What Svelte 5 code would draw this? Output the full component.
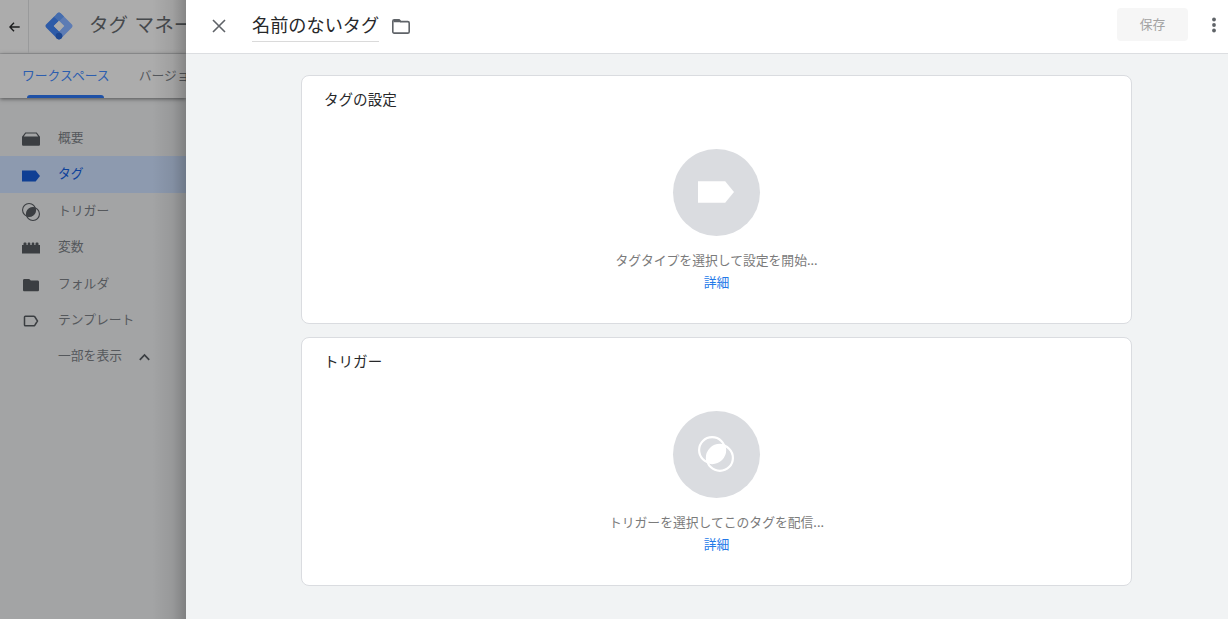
<script lang="ts">
  type NavItem = { icon: string; label: string; active?: boolean };

  const navItems: NavItem[] = [
    { icon: 'overview', label: '概要' },
    { icon: 'tag', label: 'タグ', active: true },
    { icon: 'trigger', label: 'トリガー' },
    { icon: 'variable', label: '変数' },
    { icon: 'folder', label: 'フォルダ' },
    { icon: 'template', label: 'テンプレート' },
  ];

  const cards = [
    { icon: 'tag', title: 'タグの設定', hint: 'タグタイプを選択して設定を開始...' },
    { icon: 'trigger', title: 'トリガー', hint: 'トリガーを選択してこのタグを配信...' },
  ];
</script>

{#snippet glyph(name: string)}
  {#if name === 'overview'}
    <path d="M3.3 2.5h11.4L18 6.8v7.7a1.2 1.2 0 0 1-1.2 1.2H1.2A1.2 1.2 0 0 1 0 14.5V6.8zM3.9 3.6 1.8 6.5h14.4l-2.1-2.9z" fill-rule="evenodd" />
  {:else if name === 'tag'}
    <path d="M0 3.6h13.6L18 9l-4.4 5.4H0z" />
  {:else if name === 'trigger'}
    <circle cx="7.05" cy="7.05" r="6.5" fill="none" stroke="currentColor" stroke-width="1.1" />
    <circle cx="10.95" cy="10.95" r="6.5" fill="none" stroke="currentColor" stroke-width="1.1" />
    <path d="M13.16 4.84A6.5 6.5 0 0 1 4.84 13.16 6.5 6.5 0 0 1 13.16 4.84z" />
  {:else if name === 'variable'}
    <path d="M0 14.6V6h1.5V4.4q0-1 1-1h1q1 0 1 1V6h1.2V4.4q0-1 1-1h.6q1 0 1 1V6h1.4V4.4q0-1 1-1h.6q1 0 1 1V6h1.2V4.4q0-1 1-1h1q1 0 1 1V6H18v8.6z" />
  {:else if name === 'folder'}
    <path d="M2.4 3h4.8l1.6 1.6h6.8c.8 0 1.4.6 1.4 1.4v7.9c0 .8-.6 1.4-1.4 1.4H2.4c-.8 0-1.4-.6-1.4-1.4V4.4C1 3.6 1.6 3 2.4 3z" />
  {:else if name === 'template'}
    <path d="M3.4 4.2h8.2c.5 0 .9.2 1.2.6L15.5 9l-2.7 4.2c-.3.4-.7.6-1.2.6H3.4a.9.9 0 0 1-.9-.9V5.1c0-.5.4-.9.9-.9z" fill="none" stroke="currentColor" stroke-width="1.5" />
  {/if}
{/snippet}

<div class="app">
  <aside class="backdrop">
    <header class="topbar">
      <div class="back">
        <svg width="11" height="10" viewBox="0 0 11 10" fill="none" stroke="currentColor" stroke-width="1.4">
          <path d="M5 .7.9 5 5 9.3M1 5h9.7" />
        </svg>
      </div>
      <svg class="logo" width="28" height="28" viewBox="0 0 28 28">
        <path d="M12.3 1.3a2.4 2.4 0 0 1 3.4 0l11 11a2.4 2.4 0 0 1 0 3.4l-11 11-4-4L18.6 14 9.4 4.8z" fill="#5d7cb4" />
        <path d="M9.4 4.3 14 9l-5 5 5 5 3.7 5-2 2.7a2.4 2.4 0 0 1-3.4 0l-11-11a2.4 2.4 0 0 1 0-3.4z" fill="#2d5ba8" />
        <path d="m9 5 3.3-3.7a2.4 2.4 0 0 1 3.4 0L19 4.6 14 9.3z" fill="#456dae" />
        <path d="m14 8.7 5.3 5.3-5.3 5.3L8.7 14z" fill="#acacac" />
        <circle cx="14" cy="24" r="3.3" fill="#1d4791" />
      </svg>
      <span class="product">タグ マネー</span>
    </header>
    <div class="tabs">
      <span class="tab current">ワークスペース</span>
      <span class="tab">バージョ</span>
    </div>
    <nav>
      {#each navItems as item}
        <div class="nav-item" class:active={item.active}>
          <svg class="nav-icon" width="18" height="18" viewBox="0 0 18 18" fill="currentColor">
            {@render glyph(item.icon)}
          </svg>
          <span>{item.label}</span>
        </div>
      {/each}
      <div class="nav-item more">
        <span>一部を表示</span>
        <svg width="11" height="8" viewBox="0 0 11 8" fill="none" stroke="currentColor" stroke-width="1.7">
          <path d="M.8 6.8 5.5 1.9l4.7 4.9" />
        </svg>
      </div>
    </nav>
  </aside>

  <main class="sheet">
    <header class="sheet-head">
      <svg class="close" width="14" height="14" viewBox="0 0 14 14" fill="none" stroke="currentColor" stroke-width="1.6">
        <path d="m1 1 12 12M13 1 1 13" />
      </svg>
      <h1>名前のないタグ</h1>
      <svg class="folder" width="18" height="15" viewBox="0 0 18 15">
        <path d="M2.2.8h4.9l1.7 1.8h7c.8 0 1.4.6 1.4 1.4v8.7c0 .8-.6 1.4-1.4 1.4H2.2c-.8 0-1.4-.6-1.4-1.4V2.2C.8 1.4 1.4.8 2.2.8z" fill="none" stroke="currentColor" stroke-width="1.6" />
        <path d="M1.5 1h5.7l2 2.2H1.5z" fill="currentColor" />
      </svg>
      <button class="save" disabled>保存</button>
      <svg class="menu" width="4" height="16" viewBox="0 0 4 16" fill="currentColor">
        <circle cx="2" cy="2.5" r="1.9" />
        <circle cx="2" cy="8" r="1.9" />
        <circle cx="2" cy="13.5" r="1.9" />
      </svg>
    </header>
    <div class="cards">
      {#each cards as card}
        <section class="card">
          <h2>{card.title}</h2>
          <div class="placeholder">
            <div class="disc">
              <svg width="36" height="36" viewBox="0 0 18 18" fill="currentColor">
                {@render glyph(card.icon)}
              </svg>
            </div>
            <p>{card.hint}</p>
            <a href="#details">詳細</a>
          </div>
        </section>
      {/each}
    </div>
  </main>
</div>

<style>
  :global(body) {
    margin: 0;
    overflow: hidden;
  }
  .app {
    display: flex;
    width: 1228px;
    height: 619px;
    font-family: 'Noto Sans CJK JP', sans-serif;
    font-size: 12.8px;
    line-height: 20px;
  }

  /* dimmed page behind the sheet */
  .backdrop {
    position: relative;
    width: 186px;
    flex-shrink: 0;
    overflow: hidden;
    white-space: nowrap;
    background: #a3a4a5;
    color: #55585c;
  }
  .backdrop::after {
    content: '';
    position: absolute;
    inset: 0 0 0 auto;
    width: 34px;
    background: linear-gradient(to right, rgba(0, 0, 0, 0), rgba(0, 0, 0, 0.07) 60%, rgba(0, 0, 0, 0.22));
  }
  .topbar {
    display: flex;
    align-items: center;
    height: 53px;
    background: #acacac;
    border-bottom: 1px solid #999a9b;
  }
  .back {
    display: flex;
    flex-shrink: 0;
    align-items: center;
    justify-content: center;
    width: 28px;
    height: 53px;
    border-right: 1px solid #999a9b;
    color: #1b1c1d;
  }
  .logo {
    flex-shrink: 0;
    margin: 0 16px 2px;
  }
  .product {
    margin-bottom: 5px;
    font-size: 19.6px;
    word-spacing: 2px;
    color: #46494c;
  }
  .tabs {
    display: flex;
    gap: 29px;
    height: 44px;
    padding-left: 22px;
    background: #acacac;
    box-shadow: 0 1px 4px rgba(0, 0, 0, 0.5);
  }
  .tab {
    position: relative;
    height: 44px;
    line-height: 42px;
  }
  .tab.current {
    color: #2c5eaf;
  }
  .tab.current::after {
    content: '';
    position: absolute;
    left: 5px;
    right: 6px;
    bottom: 0;
    height: 3px;
    border-radius: 3px 3px 0 0;
    background: #1f51a6;
  }
  nav {
    padding-top: 22px;
  }
  .nav-item {
    display: flex;
    align-items: center;
    gap: 18px;
    height: 36.4px;
    padding-left: 22px;
  }
  .nav-item span {
    margin-bottom: 2.4px;
  }
  .nav-icon {
    margin-top: 2px;
    color: #3b3e42;
  }
  .nav-item.active {
    background: #8d9aaf;
    color: #0f429b;
  }
  .nav-item.active .nav-icon {
    color: #0f3f94;
  }
  .nav-item.more {
    gap: 17px;
    padding-left: 58px;
  }
  .more svg {
    color: #3b3e42;
  }

  .sheet {
    flex: 1;
    background: #f1f3f4;
  }
  .sheet-head {
    display: flex;
    align-items: center;
    height: 53px;
    padding: 0 12.5px 0 26px;
    background: #fff;
    border-bottom: 1px solid #dcdee1;
    color: #5f6368;
  }
  .close {
    margin: 0 26px 2px 0;
  }
  h1 {
    height: 33px;
    margin: 0 13px 4px 0;
    border-bottom: 1px solid #dadada;
    font-size: 18.18px;
    font-weight: 400;
    line-height: 32px;
    color: #27282a;
  }
  .save {
    width: 71px;
    height: 33px;
    margin: 0 23.5px 4px auto;
    padding: 0 0 1px;
    border: 0;
    border-radius: 4px;
    background: #f6f6f6;
    font: inherit;
    color: #a3a3a3;
  }
  .menu {
    margin-bottom: 4px;
  }
  .cards {
    display: grid;
    gap: 13px;
    padding: 21px 96px 0 115px;
  }
  .card {
    box-sizing: border-box;
    height: 249px;
    border: 1px solid #dadce0;
    border-radius: 8px;
    background: #fff;
  }
  h2 {
    margin: 13px 0 0 22px;
    font-size: 14.55px;
    font-weight: 400;
    line-height: 20px;
    color: #27282a;
  }
  .placeholder {
    display: flex;
    flex-direction: column;
    align-items: center;
    padding-top: 40px;
  }
  .disc {
    display: flex;
    align-items: center;
    justify-content: center;
    width: 87px;
    height: 87px;
    border-radius: 50%;
    background: #dadce0;
    color: #fff;
  }
  .disc svg {
    margin: 0 2px 2px 0;
  }
  p {
    margin: 14px 0 2px;
    color: #7b7b7b;
  }
  a {
    color: #2379e8;
    text-decoration: none;
  }
</style>
